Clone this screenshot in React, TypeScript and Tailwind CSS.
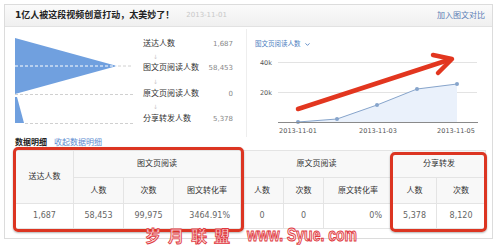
import { ChevronDown } from "lucide-react"

const funnel = [
  { label: "送达人数", value: "1,687" },
  { label: "图文页阅读人数", value: "58,453" },
  { label: "原文页阅读人数", value: "0" },
  { label: "分享转发人数", value: "5,378" },
]

const points: [number, number][] = [
  [48, 72],
  [87, 69],
  [127, 55],
  [167, 39],
  [207, 34],
]

function Funnel() {
  return (
    <svg width="130" height="100" viewBox="0 0 130 100" className="ml-[5px] mt-[3px] shrink-0">
      <polygon points="5,6 107,34 5,62" fill="#70a0df" />
      <polygon points="5,65 7,65 14,91 5,91" fill="#70a0df" />
      <line x1="5" y1="34" x2="107" y2="34" stroke="#fff" strokeDasharray="3 2" />
      <line x1="108" y1="34" x2="123" y2="34" stroke="#d0d0d0" strokeDasharray="3 2" />
      <line x1="5" y1="62.5" x2="123" y2="62.5" stroke="#d0d0d0" strokeDasharray="3 2" />
      <line x1="15" y1="91.5" x2="123" y2="91.5" stroke="#d0d0d0" strokeDasharray="3 2" />
    </svg>
  )
}

function FunnelLabels() {
  const rowH = ["h-[12px]", "h-[12px]", "h-[12px]", "h-[14px]", "h-[12px]", "h-[13px]", "h-[12px]"]
  const items: React.ReactNode[] = []
  funnel.forEach((f, i) => {
    items.push(
      <div key={f.label} className={`${rowH[i * 2]} flex items-center justify-between`}>
        <span className="text-[8px] text-[#333]">{f.label}</span>
        <span className="text-[7px] text-[#888]">{f.value}</span>
      </div>
    )
    if (i < funnel.length - 1) {
      items.push(
        <div key={f.label + "-arrow"} className={`${rowH[i * 2 + 1]} flex items-center pl-[10px] text-[6px] text-[#c8c8c8]`}>
          ↓
        </div>
      )
    }
  })
  return <div className="ml-[3px] w-[90px] pt-[9px] flex flex-col">{items}</div>
}

function Chart() {
  const line = points.map((p) => p.join(",")).join(" ")
  const area = `48,72 ${line} 207,72`
  return (
    <svg width="236" height="90" viewBox="0 0 236 90" className="overflow-visible">
      <line x1="28" y1="12.5" x2="227" y2="12.5" stroke="#e3e3e3" />
      <line x1="28" y1="42.5" x2="227" y2="42.5" stroke="#e3e3e3" />
      <text x="22" y="14.5" textAnchor="end" fontSize="6.5" fill="#555">40k</text>
      <text x="22" y="44.5" textAnchor="end" fontSize="6.5" fill="#555">20k</text>
      <polygon points={area} fill="#eaf1fb" />
      <polyline points={line} fill="none" stroke="#86a4cb" strokeWidth="1" />
      {points.map(([x, y]) => (
        <circle key={x} cx={x} cy={y} r="2" fill="#86a4cb" />
      ))}
      <line x1="28" y1="72.5" x2="228" y2="72.5" stroke="#8a8a8a" strokeWidth="1.2" />
      <text x="48" y="82.5" textAnchor="middle" fontSize="6.5" fill="#555">2013-11-01</text>
      <text x="128" y="82.5" textAnchor="middle" fontSize="6.5" fill="#555">2013-11-03</text>
      <text x="206" y="82.5" textAnchor="middle" fontSize="6.5" fill="#555">2013-11-05</text>
      <g stroke="#e2361f" strokeWidth="4.5" strokeLinecap="round" strokeLinejoin="round" fill="none">
        <line x1="48" y1="59" x2="200" y2="9.5" />
        <polyline points="183,5 202,9 188,23" />
      </g>
    </svg>
  )
}

const th = "border border-[#e4e4e4] bg-[#f8f8f8] text-[8px] text-[#333] font-normal"
const td = "border border-[#e4e4e4] text-[8px] text-[#666] text-center"
const tdRate = "border border-[#e4e4e4] text-[8px] text-[#666] text-right pr-[10px]"

function DetailTable() {
  return (
    <table className="ml-[10px] w-[470px] table-fixed border-collapse">
      <colgroup>
        <col className="w-[58px]" />
        <col className="w-[50px]" />
        <col className="w-[50px]" />
        <col className="w-[67px]" />
        <col className="w-[43px]" />
        <col className="w-[40px]" />
        <col className="w-[69px]" />
        <col className="w-[44px]" />
        <col className="w-[49px]" />
      </colgroup>
      <thead>
        <tr className="h-[27px]">
          <th rowSpan={2} className={th}>送达人数</th>
          <th colSpan={3} className={th}>图文页阅读</th>
          <th colSpan={3} className={th}>原文页阅读</th>
          <th colSpan={2} className={th}>分享转发</th>
        </tr>
        <tr className="h-[26px]">
          <th className={th}>人数</th>
          <th className={th}>次数</th>
          <th className={th}>图文转化率</th>
          <th className={th}>人数</th>
          <th className={th}>次数</th>
          <th className={th}>原文转化率</th>
          <th className={th}>人数</th>
          <th className={th}>次数</th>
        </tr>
      </thead>
      <tbody>
        <tr className="h-[25px]">
          <td className={td}>1,687</td>
          <td className={td}>58,453</td>
          <td className={td}>99,975</td>
          <td className={tdRate}>3464.91%</td>
          <td className={td}>0</td>
          <td className={td}>0</td>
          <td className={tdRate}>0%</td>
          <td className={td}>5,378</td>
          <td className={td}>8,120</td>
        </tr>
      </tbody>
    </table>
  )
}

export default function App() {
  return (
    <div className="relative w-[500px] h-[245px] overflow-hidden bg-white font-['DejaVu_Sans','Noto_Sans_CJK_SC',sans-serif]">
      <div className="pt-[4px] pl-[4px]">
        <div className="w-[489px] h-[235px] border border-[#dcdcdc]">
          <div className="h-[22px] flex items-center justify-between pl-[10px] pr-[7px] border-b border-[#e2e2e2] bg-gradient-to-b from-[#fafafa] to-[#f0f0f0]">
            <div className="flex items-center">
              <span className="text-[9px] font-bold text-[#222]">1亿人被这段视频创意打动，太美妙了！</span>
              <span className="ml-[12px] text-[7px] text-[#c8c8c8]">2013-11-01</span>
            </div>
            <span className="text-[8px] text-[#5a7db5]">加入图文对比</span>
          </div>

          <div className="h-[110px] flex">
            <div className="w-[242px] h-[108px] mt-[2px] flex border-r border-[#eeeeee]">
              <Funnel />
              <FunnelLabels />
            </div>
            <div className="pl-[8px] pt-[13px] flex flex-col">
              <div className="h-[10px] flex items-center gap-[3px] text-[6.5px] text-[#4f7fbf]">
                图文页阅读人数
                <ChevronDown size={7} strokeWidth={3} />
              </div>
              <div className="-ml-[5px]">
                <Chart />
              </div>
            </div>
          </div>

          <div className="h-[12px] pl-[10px] flex items-center gap-[7px] text-[8px]">
            <span className="font-bold text-[#222]">数据明细</span>
            <span className="text-[#5b8bd0]">收起数据明细</span>
          </div>
          <div className="mt-[1px]">
            <DetailTable />
          </div>
        </div>
      </div>

      <div className="absolute left-[13px] top-[147px] w-[231px] h-[85px] border-[3px] border-[#dc3522] rounded-[5px] shadow-[0_1px_2px_rgba(0,0,0,0.3)]" />
      <div className="absolute left-[390px] top-[152px] w-[97px] h-[80px] border-[3px] border-[#dc3522] rounded-[5px] shadow-[0_1px_2px_rgba(0,0,0,0.3)]" />

      <div className="absolute left-[145px] top-[226px] h-[17px] flex items-center leading-none text-[#fbdcdc] [-webkit-text-stroke:0.8px_#e0383e]">
        <div className="flex gap-[7px] text-[16px] font-bold font-['Noto_Sans_CJK_SC',sans-serif]">
          <span>岁</span>
          <span>月</span>
          <span>联</span>
          <span>盟</span>
        </div>
        <span className="ml-[17px] text-[14px] font-bold scale-y-[1.25] font-['Liberation_Sans',sans-serif]">www. Syue. com</span>
      </div>
    </div>
  )
}
